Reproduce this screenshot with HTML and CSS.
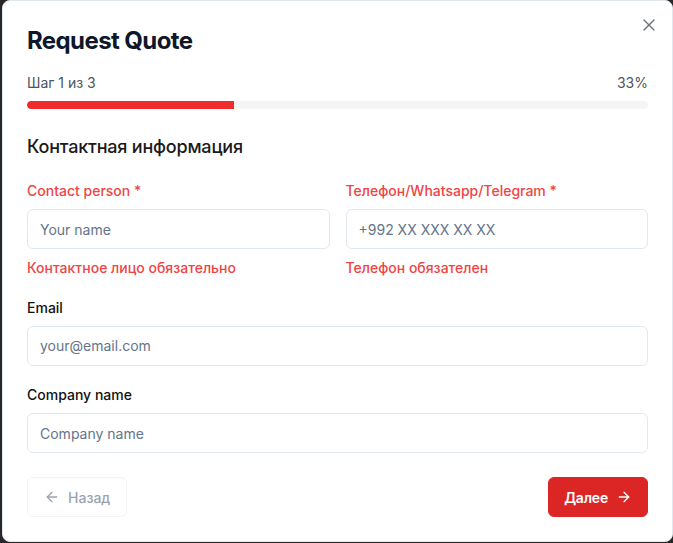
FILE: index.html
```html
<!DOCTYPE html>
<html lang="ru">
<head>
<meta charset="utf-8">
<title>Request Quote</title>
<link rel="stylesheet" href="styles.css">
</head>
<body>
<div class="modal">
  <button class="close" type="button" aria-label="Close">
    <svg viewBox="0 0 24 24" width="20" height="20" fill="none" stroke="currentColor" stroke-width="1.6" stroke-linecap="round" stroke-linejoin="round"><path d="M18 6 6 18"/><path d="m6 6 12 12"/></svg>
  </button>
  <h1 class="title">Request Quote</h1>
  <div class="step-row">
    <span>Шаг 1 из 3</span>
    <span>33%</span>
  </div>
  <div class="track"><div class="fill" style="width:33.33%"></div></div>
  <h2 class="section">Контактная информация</h2>
  <div class="grid">
    <div class="field">
      <label class="label label-error">Contact person *</label>
      <input class="input" type="text" placeholder="Your name">
      <div class="error">Контактное лицо обязательно</div>
    </div>
    <div class="field">
      <label class="label label-error">Телефон/Whatsapp/Telegram *</label>
      <input class="input" type="text" placeholder="+992 XX XXX XX XX">
      <div class="error">Телефон обязателен</div>
    </div>
  </div>
  <div class="field spaced">
    <label class="label">Email</label>
    <input class="input" type="text" placeholder="your@email.com">
  </div>
  <div class="field spaced">
    <label class="label">Company name</label>
    <input class="input" type="text" placeholder="Company name">
  </div>
  <div class="actions">
    <button class="btn btn-back" type="button">
      <svg viewBox="0 0 24 24" width="16" height="16" fill="none" stroke="currentColor" stroke-width="2" stroke-linecap="round" stroke-linejoin="round"><path d="m12 19-7-7 7-7"/><path d="M19 12H5"/></svg>
      Назад
    </button>
    <button class="btn btn-next" type="button">
      Далее
      <svg viewBox="0 0 24 24" width="16" height="16" fill="none" stroke="currentColor" stroke-width="2" stroke-linecap="round" stroke-linejoin="round"><path d="M5 12h14"/><path d="m12 5 7 7-7 7"/></svg>
    </button>
  </div>
</div>
</body>
</html>
```

FILE: styles.css
```css
* { box-sizing: border-box; }
html, body {
  margin: 0;
  padding: 0;
  background: #272727;
  font-family: Inter, "Noto Sans", sans-serif;
  height: 543px;
  overflow: hidden;
}
.modal {
  position: relative;
  margin-left: 2px;
  width: 671px;
  background: #ffffff;
  border: 1px solid #e2e8f0;
  border-radius: 8px;
  padding: 24px;
}
.close {
  position: absolute;
  top: 14px;
  right: 13px;
  width: 20px;
  height: 20px;
  padding: 0;
  border: 0;
  background: transparent;
  color: #6b7280;
  display: flex;
}
.title {
  margin: 0;
  font-size: 24px;
  line-height: 32px;
  font-weight: 700;
  color: #0f172a;
  letter-spacing: -0.6px;
}
.step-row {
  margin-top: 16px;
  display: flex;
  justify-content: space-between;
  font-size: 14px;
  line-height: 20px;
  color: #4b5563;
}
.track {
  margin-top: 8px;
  height: 8px;
  border-radius: 4px;
  background: #f5f5f5;
  overflow: hidden;
}
.fill {
  height: 100%;
  background: #ef2b2b;
  border-radius: 4px 0 0 4px;
}
.section {
  margin: 24px 0 0;
  font-size: 18px;
  line-height: 28px;
  font-weight: 500;
  letter-spacing: -0.2px;
  color: #1a1a1a;
}
.grid {
  margin-top: 19px;
  display: grid;
  grid-template-columns: 1fr 1fr;
  gap: 16px;
}
.field {
  display: flex;
  flex-direction: column;
}
.spaced { margin-top: 18.5px; }
.label {
  font-size: 14px;
  line-height: 21px;
  font-weight: 500;
  color: #111111;
  margin-bottom: 8px;
}
.label-error { color: #ef4444; }
.input {
  height: 40px;
  border: 1px solid #e2e8f0;
  border-radius: 6px;
  padding: 0 12px;
  font-family: inherit;
  font-size: 14px;
  color: #0f172a;
  background: #fff;
  outline: none;
}
.input::placeholder { color: #64748b; }
.error {
  margin-top: 8px;
  font-size: 14px;
  line-height: 21px;
  font-weight: 500;
  color: #ef4444;
}
.actions {
  margin-top: 24px;
  display: flex;
  justify-content: space-between;
}
.btn {
  height: 40px;
  display: inline-flex;
  align-items: center;
  gap: 8px;
  padding: 0 16px;
  border-radius: 6px;
  font-family: inherit;
  font-size: 14px;
  font-weight: 500;
}
.btn-back {
  background: #fff;
  border: 1px solid #f1f3f6;
  color: #9ca3af;
}
.btn-next {
  background: #dc2626;
  border: 1px solid #dc2626;
  color: #fff;
  font-weight: 600;
  letter-spacing: -0.2px;
  padding: 0 15px;
}
```
